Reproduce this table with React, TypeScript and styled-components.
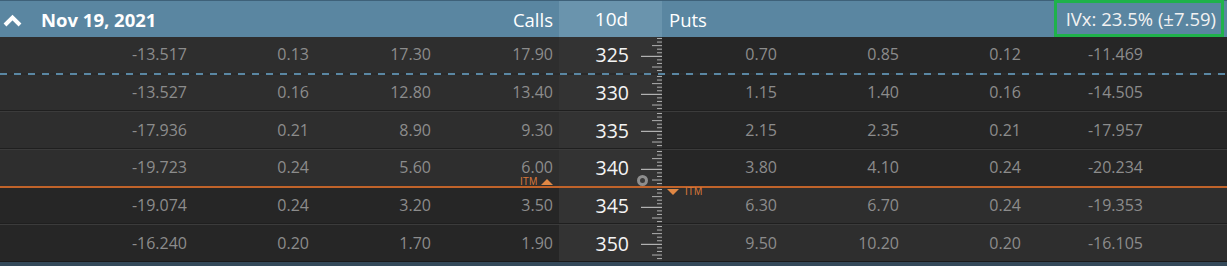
import React from "react";
import styled, { createGlobalStyle, css } from "styled-components";

const GlobalStyle = createGlobalStyle`
  html, body {
    margin: 0;
    padding: 0;
    background: #262626;
  }
  body {
    font-family: "Open Sans", "Noto Sans", "Liberation Sans", sans-serif;
  }
`;

const StChain = styled.div`
  width: 1227px;
  height: 266px;
  display: flex;
  flex-direction: column;
  background: #262626;
  overflow: hidden;
`;

const StHeader = styled.div`
  display: flex;
  height: 37px;
  flex-shrink: 0;
  background: #5a86a1;
  border-top: 1px solid #3e6179;
  box-sizing: border-box;
  color: #ffffff;
`;

const StHeaderSide = styled.div<{ side: "calls" | "puts" }>`
  display: flex;
  align-items: center;
  ${({ side }) =>
    side === "calls"
      ? css`
          width: 559px;
          padding: 0 6px 0 3px;
        `
      : css`
          flex: 1;
          padding: 0 3px 0 7px;
        `}
  box-sizing: border-box;
`;

const StChevron = styled.svg`
  width: 19px;
  height: 13px;
  margin-top: 2px;
`;

const StDate = styled.span`
  margin-left: 19px;
  font-size: 18.5px;
  font-weight: 700;
`;

const StSideLabel = styled.span<{ align: "left" | "right" }>`
  font-size: 18.5px;
  ${({ align }) => (align === "right" ? "margin-left: auto;" : "")}
`;

const StHeaderMid = styled.div`
  width: 103px;
  flex-shrink: 0;
  display: flex;
  align-items: center;
  justify-content: center;
  background: #6a94ad;
  font-size: 19px;
  padding-left: 2px;
  box-sizing: border-box;
`;

const StIvx = styled.div`
  margin-left: auto;
  height: 37px;
  margin-top: -1px;
  padding: 0 5px 0 9px;
  display: flex;
  align-items: center;
  border: 3px solid #1fb24b;
  box-sizing: border-box;
  font-size: 18.5px;
  color: #f2f2f2;
`;

const StRow = styled.div`
  display: flex;
  height: 35.67px;
  flex-shrink: 0;
`;

const StCells = styled.div<{ side: "calls" | "puts"; itm: boolean }>`
  display: grid;
  align-items: center;
  background: ${({ itm }) => (itm ? "#2e2e2e" : "#262626")};
  ${({ side }) =>
    side === "calls"
      ? css`
          width: 559px;
          padding: 0 6px 0 65px;
          grid-template-columns: repeat(4, 122px);
        `
      : css`
          flex: 1;
          grid-template-columns: 115px 122px 122px 122px;
        `}
  box-sizing: border-box;
`;

const StValue = styled.span`
  text-align: right;
  font-size: 16px;
  line-height: 17px;
  color: #8c8c8c;
`;

const StStrike = styled.div`
  width: 103px;
  flex-shrink: 0;
  display: flex;
  align-items: center;
  justify-content: flex-end;
  gap: 11px;
  background: #333333;
`;

const StStrikeText = styled.span`
  font-size: 19.5px;
  color: #f4f4f4;
`;

const StRuler = styled.svg`
  width: 22px;
  height: 100%;
  flex-shrink: 0;
`;

const StDivider = styled.div<{ kind: "plain" | "dashed" | "itm" }>`
  position: relative;
  height: 2px;
  flex-shrink: 0;
  ${({ kind }) =>
    kind === "plain"
      ? css`
          background: linear-gradient(#1f1f1f 0 1px, #3b3b3b 1px 2px);
        `
      : kind === "dashed"
      ? css`
          background: repeating-linear-gradient(
            90deg,
            #5a87a3 0 7px,
            #2a2a2a 7px 14px
          );
        `
      : css`
          background: #c0632a;
        `}
`;

const StItm = styled.div<{ side: "calls" | "puts" }>`
  position: absolute;
  display: flex;
  align-items: center;
  gap: 4px;
  font-size: 10px;
  line-height: 8px;
  color: #d7773a;
  font-family: "Liberation Sans", sans-serif;
  ${({ side }) =>
    side === "calls"
      ? css`
          left: 520px;
          bottom: 2px;
        `
      : css`
          left: 667px;
          top: 2px;
          flex-direction: row-reverse;
          justify-content: flex-end;
        `}
`;

const StTriangle = styled.span<{ dir: "up" | "down" }>`
  width: 0;
  height: 0;
  border-left: 6px solid transparent;
  border-right: 6px solid transparent;
  ${({ dir }) =>
    dir === "up"
      ? "border-bottom: 6px solid #e08744;"
      : "border-top: 6px solid #e08744; margin-right: 2px;"}
`;

const StKnob = styled.span`
  position: absolute;
  left: 637px;
  top: -11px;
  width: 5px;
  height: 5px;
  border: 3px solid #8e8e8e;
  border-radius: 50%;
  background: #3a3a3a;
`;

const StFooter = styled.div`
  flex: 1;
  background: #34495a;
  border-top: 1px solid #1a1a1a;
`;

interface IRow {
  strike: number;
  calls: string[];
  puts: string[];
}

const ROWS: IRow[] = [
  { strike: 325, calls: ["-13.517", "0.13", "17.30", "17.90"], puts: ["0.70", "0.85", "0.12", "-11.469"] },
  { strike: 330, calls: ["-13.527", "0.16", "12.80", "13.40"], puts: ["1.15", "1.40", "0.16", "-14.505"] },
  { strike: 335, calls: ["-17.936", "0.21", "8.90", "9.30"], puts: ["2.15", "2.35", "0.21", "-17.957"] },
  { strike: 340, calls: ["-19.723", "0.24", "5.60", "6.00"], puts: ["3.80", "4.10", "0.24", "-20.234"] },
  { strike: 345, calls: ["-19.074", "0.24", "3.20", "3.50"], puts: ["6.30", "6.70", "0.24", "-19.353"] },
  { strike: 350, calls: ["-16.240", "0.20", "1.70", "1.90"], puts: ["9.50", "10.20", "0.20", "-16.105"] },
];

const UNDERLYING = 342.5;

const Ruler = () => {
  const ticks = Array.from({ length: 10 }, (_, i) => i);
  return (
    <StRuler viewBox="0 0 22 36" preserveAspectRatio="none">
      {ticks.map((i) => {
        const y = i * 3.6 + 1;
        const len = i === 5 ? 21 : i === 2 || i === 8 ? 10 : 5;
        return (
          <rect
            key={i}
            x={22 - len}
            y={y}
            width={len}
            height={1}
            fill={i === 5 ? "#cfcfcf" : "#b0b0b0"}
          />
        );
      })}
    </StRuler>
  );
};

const App = () => {
  return (
    <StChain>
      <GlobalStyle />
      <StHeader>
        <StHeaderSide side="calls">
          <StChevron viewBox="0 0 19 13">
            <polyline
              points="2,11 9.5,3.5 17,11"
              fill="none"
              stroke="#ffffff"
              strokeWidth="4"
            />
          </StChevron>
          <StDate>Nov 19, 2021</StDate>
          <StSideLabel align="right">Calls</StSideLabel>
        </StHeaderSide>
        <StHeaderMid>10d</StHeaderMid>
        <StHeaderSide side="puts">
          <StSideLabel align="left">Puts</StSideLabel>
          <StIvx>IVx: 23.5% (±7.59)</StIvx>
        </StHeaderSide>
      </StHeader>
      {ROWS.map((row, index) => {
        const next = ROWS[index + 1];
        const crossesPrice = next && row.strike < UNDERLYING && next.strike > UNDERLYING;
        return (
          <React.Fragment key={row.strike}>
            <StRow>
              <StCells side="calls" itm={row.strike < UNDERLYING}>
                {row.calls.map((v, i) => (
                  <StValue key={i}>{v}</StValue>
                ))}
              </StCells>
              <StStrike>
                <StStrikeText>{row.strike}</StStrikeText>
                <Ruler />
              </StStrike>
              <StCells side="puts" itm={row.strike > UNDERLYING}>
                {row.puts.map((v, i) => (
                  <StValue key={i}>{v}</StValue>
                ))}
              </StCells>
            </StRow>
            {next && (
              <StDivider kind={index === 0 ? "dashed" : crossesPrice ? "itm" : "plain"}>
                {crossesPrice && (
                  <>
                    <StItm side="calls">
                      ITM
                      <StTriangle dir="up" />
                    </StItm>
                    <StKnob />
                    <StItm side="puts">
                      ITM
                      <StTriangle dir="down" />
                    </StItm>
                  </>
                )}
              </StDivider>
            )}
          </React.Fragment>
        );
      })}
      <StFooter />
    </StChain>
  );
};

export default App;
